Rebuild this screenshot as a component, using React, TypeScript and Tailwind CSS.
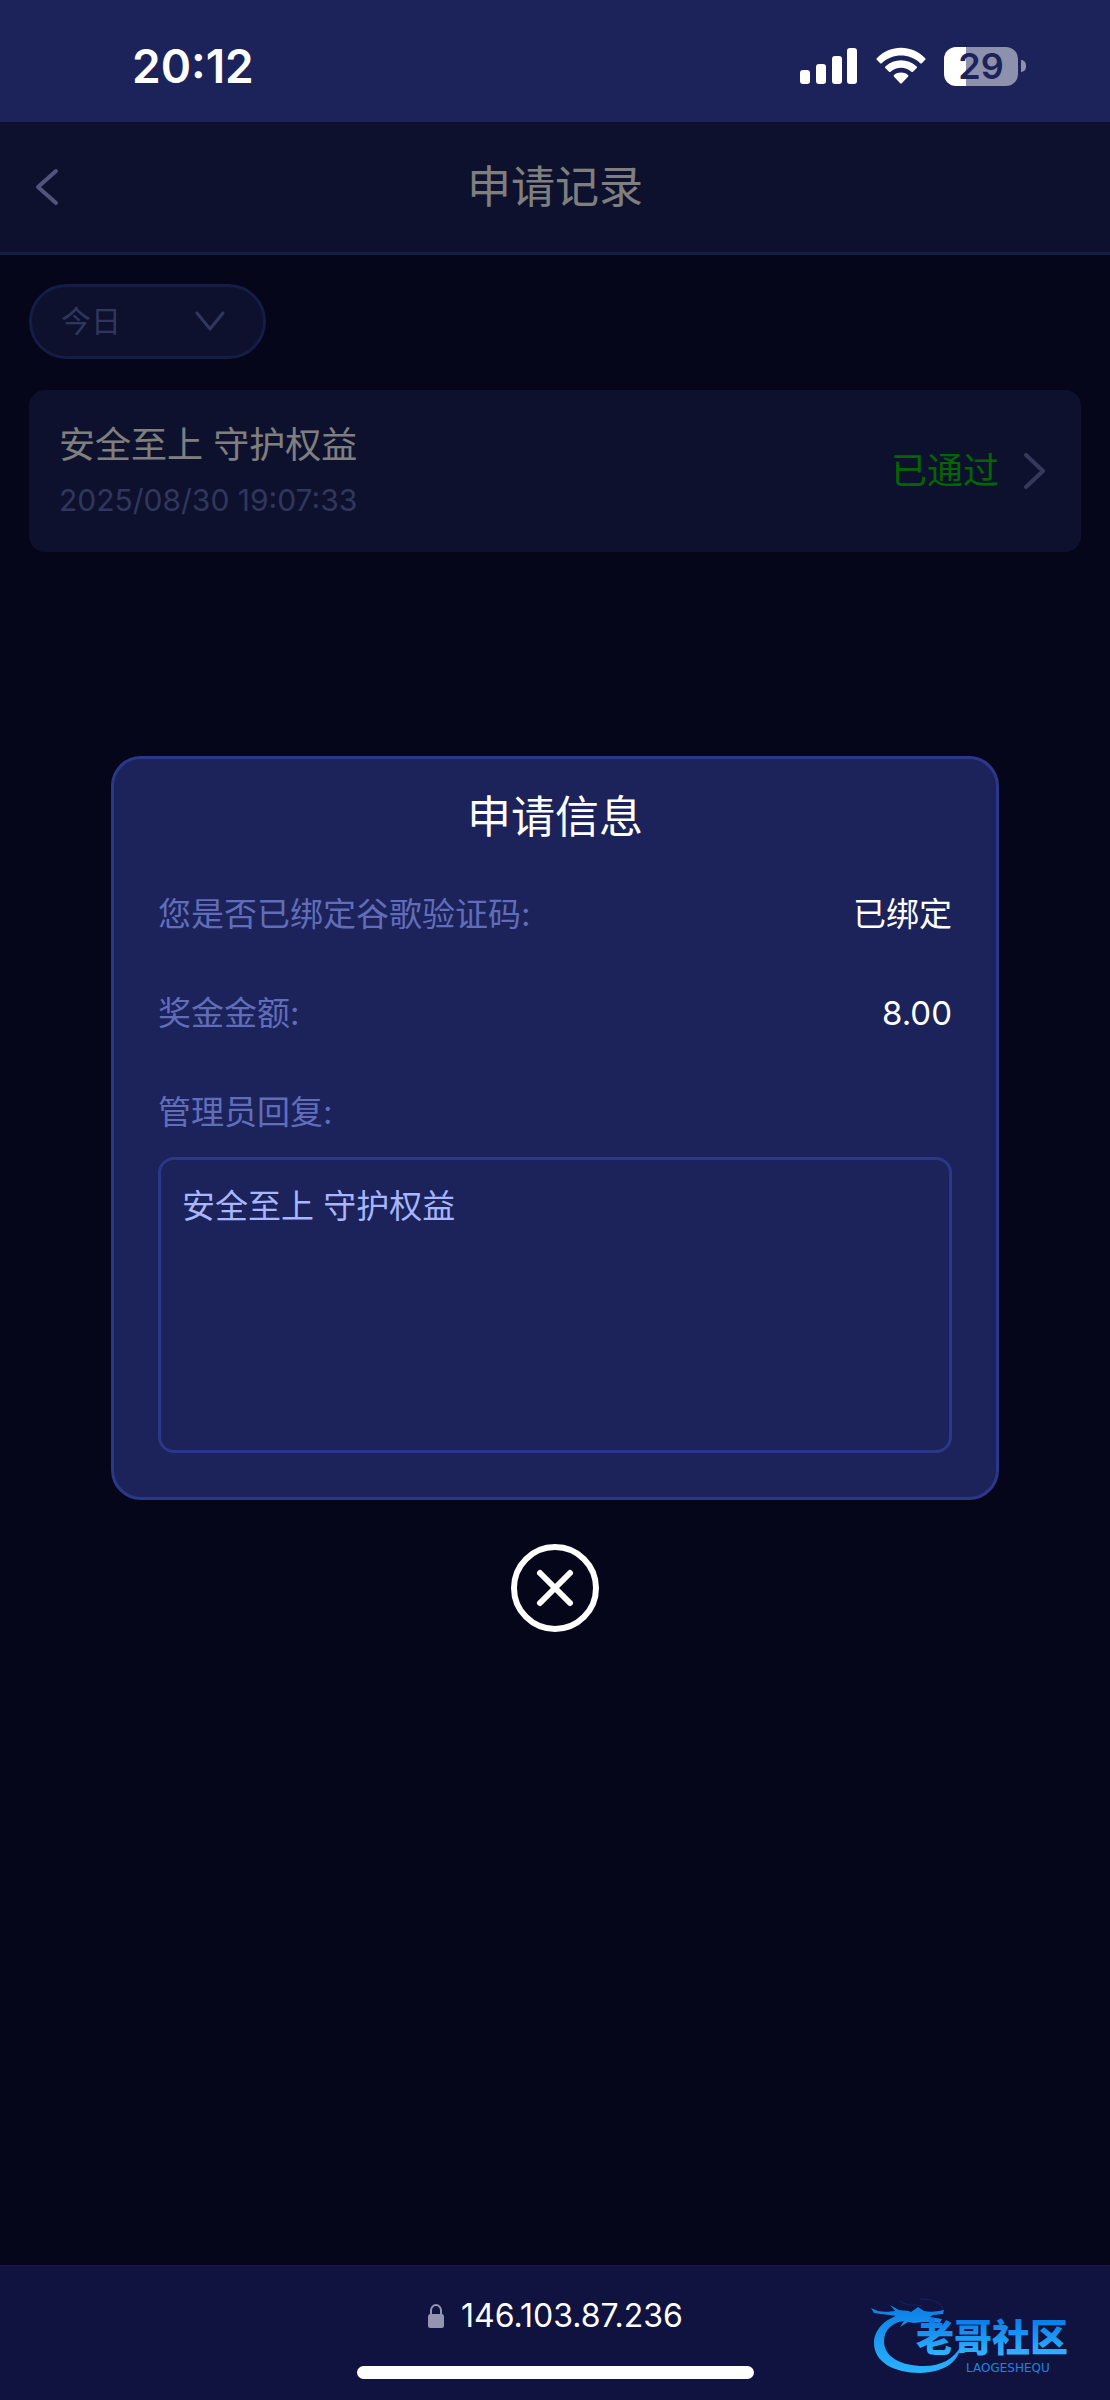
import { useState } from 'react'

interface Application {
  id: string
  title: string
  createdAt: string
  status: string
}

interface InfoRow {
  label: string
  value: string
}

const applications: Application[] = [
  { id: '1', title: '安全至上 守护权益', createdAt: '2025/08/30 19:07:33', status: '已通过' },
]

const infoRows: InfoRow[] = [
  { label: '您是否已绑定谷歌验证码:', value: '已绑定' },
  { label: '奖金金额:', value: '8.00' },
]

function StatusBar() {
  return (
    <div className="flex h-[122px] items-center justify-between bg-[#1b235a] pt-2.5 pr-[84px] pl-[132px]">
      <span className="text-[46px] leading-none font-semibold text-white">20:12</span>
      <div className="flex items-center gap-[18px]">
        <svg width="58" height="38" viewBox="0 0 58 38" fill="#fff">
          <rect x="0" y="23" width="10" height="14" rx="3" />
          <rect x="16" y="17" width="10" height="20" rx="3" />
          <rect x="32" y="9" width="10" height="28" rx="3" />
          <rect x="47" y="1" width="10" height="36" rx="3" />
        </svg>
        <svg width="50" height="38" viewBox="0 0 50 38" fill="#fff">
          <path d="M.8 11.2C14.5-2.6 35.5-2.6 49.2 11.2Q50 12 49.2 12.8L45.8 16.2Q45 17 44.2 16.2C33.2 6 16.8 6 5.8 16.2Q5 17 4.2 16.2L.8 12.8Q0 12 .8 11.2Z" />
          <path d="M9.3 19.5C18.4 11 31.6 11 40.7 19.5Q41.5 20.3 40.7 21.1L37 24.7Q36.2 25.4 35.4 24.7C29.4 19.3 20.6 19.3 14.6 24.7Q13.8 25.4 13 24.7L9.3 21.1Q8.5 20.3 9.3 19.5Z" />
          <path d="M18 28C22 24.8 28 24.8 32 28Q32.8 28.9 32 29.7L25.8 36.3Q25 37 24.2 36.3L18 29.7Q17.2 28.9 18 28Z" />
        </svg>
        <div className="flex items-center gap-[3px]">
          <div className="flex h-[39px] w-[74px] items-center justify-center rounded-xl bg-[linear-gradient(90deg,#fff_22px,#8d91ac_22px)]">
            <span className="text-[36px] leading-none font-semibold text-[#1b235a]">29</span>
          </div>
          <div className="h-3 w-[5px] rounded-r-full bg-[#8d91ac]" />
        </div>
      </div>
    </div>
  )
}

function DragonLogo() {
  return (
    <svg
      className="absolute right-0 bottom-0"
      width="260"
      height="120"
      viewBox="0 0 260 120"
      role="img"
      aria-label="老哥社区"
    >
      <defs>
        <linearGradient id="ring" x1="0" y1="26" x2="0" y2="94" gradientUnits="userSpaceOnUse">
          <stop offset="0" stopColor="#0b7fe6" />
          <stop offset="1" stopColor="#2bb4ff" />
        </linearGradient>
        <linearGradient id="word" x1="0" y1="40" x2="0" y2="74" gradientUnits="userSpaceOnUse">
          <stop offset="0" stopColor="#0a7de8" />
          <stop offset="1" stopColor="#2fb2ff" />
        </linearGradient>
      </defs>
      <g fill="url(#ring)">
        <path d="M56 33C36 37 24 49 24 63C24 82 44 93 70 93C92 92 108 84 111 66C104 79 91 86 74 86C51 86 34 77 34 61C34 50 42 42 58 39Z" />
        <path d="M21 28L28 31C33 32 38 32 45 31L40 25L49 30C54 31 58 30 61 32L68 27L74 31C80 32 86 32 94 30L93 34L83 35L80 37L92 39L90 43L82 42L74 42L64 43L58 42L50 47L54 41L44 43L49 37C41 34 33 35 24 33Z" />
      </g>
      <path d="M50 21C58 27 64 24 72 26M70 19C82 19 92 22 93 30" fill="none" stroke="#11265f" strokeWidth="1" />
      <text
        x="66"
        y="71"
        fontSize="38"
        fontWeight="900"
        fill="url(#word)"
        className="font-['Noto_Sans_CJK_SC',sans-serif]"
      >
        老哥社区
      </text>
      <text x="116" y="92" fontSize="12" fill="#1688e0" className="font-['DejaVu_Sans',sans-serif]">
        LAOGESHEQU
      </text>
    </svg>
  )
}

export default function App() {
  const [range, setRange] = useState('today')
  const [selected, setSelected] = useState<Application | null>(applications[0])

  return (
    <div className="flex min-h-screen flex-col bg-[#0a0c34] font-[Inter,'Noto_Sans_CJK_SC',sans-serif]">
      <StatusBar />

      <div className="relative flex flex-1 flex-col">
        <header className="grid h-[133px] grid-cols-[1fr_auto_1fr] items-center border-b-3 border-[#2b388a] bg-[#1b235a] px-[29px]">
          <button type="button" aria-label="返回" className="justify-self-start">
            <svg width="36" height="44" viewBox="0 0 36 44" fill="none" stroke="#a3abf2" strokeWidth="4" strokeLinecap="round" strokeLinejoin="round">
              <path d="M27 6L9 22L27 38" />
            </svg>
          </button>
          <h1 className="text-[44px] leading-[46px] text-white">申请记录</h1>
        </header>

        <main className="flex flex-col gap-[31px] px-[29px] pt-[29px]">
          <div className="relative flex w-[237px] items-center">
            <select
              aria-label="日期"
              value={range}
              onChange={(e) => setRange(e.target.value)}
              className="h-[75px] w-full appearance-none rounded-full border-3 border-[#2b388a] bg-[#1b235a] pl-[29px] text-[30px] text-[#626dba]"
            >
              <option value="today">今日</option>
              <option value="yesterday">昨日</option>
            </select>
            <svg className="pointer-events-none absolute right-10" width="32" height="24" viewBox="0 0 32 24" fill="none" stroke="#626dba" strokeWidth="3" strokeLinecap="round" strokeLinejoin="round">
              <path d="M3 3L16 19L29 3" />
            </svg>
          </div>

          {applications.map((item) => (
            <button
              type="button"
              key={item.id}
              onClick={() => setSelected(item)}
              className="flex h-[162px] items-center justify-between rounded-2xl bg-[#1b235a] pr-[34px] pl-[30px] text-left"
            >
              <div className="flex flex-col gap-3">
                <span className="text-[36px] leading-[46px] text-white">{item.title}</span>
                <span className="text-[30px] leading-[40px] text-[#626dba]">{item.createdAt}</span>
              </div>
              <div className="flex items-center gap-6">
                <span className="text-[36px] leading-none text-[#03cb03]">{item.status}</span>
                <svg width="24" height="36" viewBox="0 0 24 36" fill="none" stroke="#6c73b4" strokeWidth="4" strokeLinecap="round" strokeLinejoin="round">
                  <path d="M3 2L20 18L3 34" />
                </svg>
              </div>
            </button>
          ))}
        </main>

        {selected && (
          <div className="absolute inset-0 flex flex-col items-center justify-center gap-11 bg-black/50">
            <section
              role="dialog"
              aria-labelledby="dialog-title"
              className="flex w-4/5 flex-col rounded-[30px] border-3 border-[#2b388a] bg-[#1b235a] px-11 pt-[35px] pb-11"
            >
              <h2 id="dialog-title" className="text-center text-[44px] leading-[46px] text-white">
                申请信息
              </h2>
              <dl className="mt-[50px] flex flex-col gap-[50px] text-[33px] leading-[49px]">
                {infoRows.map((row) => (
                  <div key={row.label} className="flex justify-between">
                    <dt className="text-[#626dba]">{row.label}</dt>
                    <dd className="text-white">{row.value}</dd>
                  </div>
                ))}
              </dl>
              <label htmlFor="reply" className="mt-[50px] text-[33px] leading-[49px] text-[#626dba]">
                管理员回复:
              </label>
              <textarea
                id="reply"
                readOnly
                value="安全至上 守护权益"
                className="mt-5 h-[296px] w-full resize-none rounded-2xl border-3 border-[#2b388a] bg-transparent px-[21px] py-[22px] text-[33px] leading-[49px] text-[#a9b5fd] outline-none"
              />
            </section>
            <button type="button" aria-label="关闭" onClick={() => setSelected(null)}>
              <svg width="88" height="88" viewBox="0 0 88 88" fill="none" stroke="#fff" strokeWidth="6" strokeLinecap="round">
                <circle cx="44" cy="44" r="41" />
                <path d="M29 29L59 59M59 29L29 59" />
              </svg>
            </button>
          </div>
        )}
      </div>

      <footer className="relative flex flex-col items-center border-t border-[#201a40] bg-[#10123f] pt-[30px] pb-[21px]">
        <div className="flex h-10 items-center gap-4">
          <svg width="18" height="26" viewBox="0 0 18 26">
            <path d="M4 11V7.5A5 5.5 0 0 1 14 7.5V11" fill="none" stroke="#9495b0" strokeWidth="2" />
            <rect x="1" y="11" width="16" height="14" rx="2.5" fill="#9495b0" />
          </svg>
          <span className="text-[32px] leading-none text-white">146.103.87.236</span>
        </div>
        <div className="mt-[30px] h-[13px] w-[397px] max-w-full rounded-full bg-white" />
        <DragonLogo />
      </footer>
    </div>
  )
}
